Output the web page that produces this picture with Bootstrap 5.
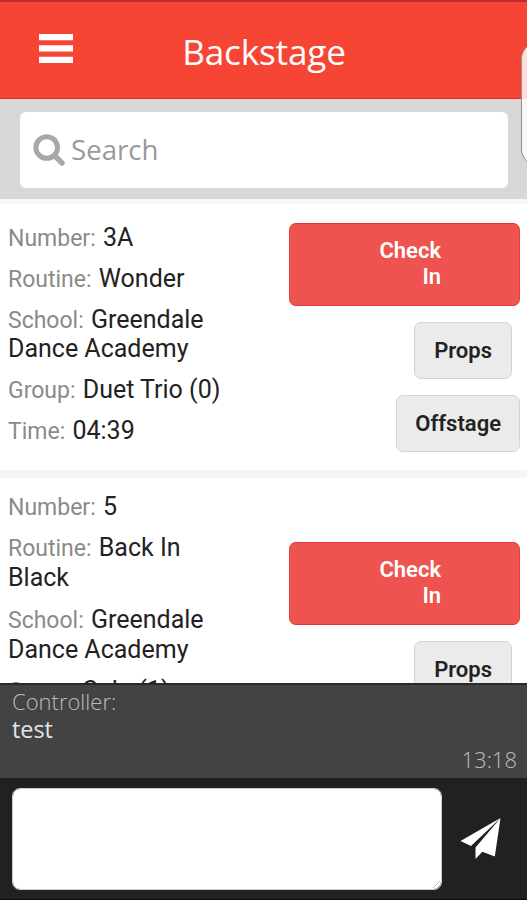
<!DOCTYPE html>
<html lang="en">
<head>
<meta charset="utf-8">
<meta name="viewport" content="width=device-width, initial-scale=1">
<title>Backstage</title>
<link href="https://cdn.jsdelivr.net/npm/bootstrap@5.3.0/dist/css/bootstrap.min.css" rel="stylesheet">
<style>
  body { font-family: Roboto, sans-serif; color: #222; }
  .app { height: 900px; }
  .app-bar { height: 99px; background: #f64435; border-top: 2px solid #b9302a; border-bottom: 1px solid #ea3019; padding: 0 39px 2px; }
  .app-title { font: 400 35.2px/48px "Open Sans", sans-serif; letter-spacing: -.2px; margin-right: 33px; padding-top: 3px; }
  .search-bar { height: 100px; background: #d7d7d7; padding: 13px 19px 11px 20px; }
  .search-box { border-radius: 6px; padding-left: 13px; gap: 6px; color: #a8a8a8; }
  .search-input, .search-input:focus { font: 400 27.6px/40px "Open Sans", sans-serif; color: #999; border: 0; box-shadow: none; padding: 0 0 3px; height: 76px; }
  .search-input::placeholder { color: #999; opacity: 1; }
  .entries { border-top: 5px solid #f7f7f7; }
  .entry { padding: 19px 7px 0 8px; }
  .entry + .entry { border-top: 8px solid #f5f5f5; padding-top: 14px; }
  .entry-first { height: 266px; }
  .details { width: 235px; }
  .details p { font-size: 25px; line-height: 30px; margin: 0 0 11.4px; }
  .entry-first .details p { line-height: 29.8px; margin-bottom: 11px; }
  .details span { font-size: 23px; line-height: 1; color: #8a8a8a; margin-right: 1px; }
  .actions { width: 231px; }
  .entry + .entry .actions { padding-top: 50px; }
  .act { font-size: 22px; line-height: 26px; font-weight: 600; border-radius: 7px; }
  .act-check { background: #ee5350; border: 1px solid #e24443; border-top-color: #dc3434; border-bottom-color: #dc3434; color: #fff; height: 83px; padding: 0 78px 1px 0; }
  .act-plain { background: #ebebeb; border: 1px solid #d4d4d4; color: #222; height: 57px; padding: 0 18px; }
  .act-props { padding: 0 19px; }
  .message { height: 95px; background: #434343; border-top: 2px solid #2a2a2a; padding: 2px 10px 0 12px; font: 400 23.4px/28px "Open Sans", sans-serif; color: #e6e6e6; }
  .message .who, .message .when { color: #bcbcbc; font-size: 22px; font-weight: 300; }
  .message .when { padding-top: 2px; }
  .composer { height: 122px; background: #212121; padding: 9px 26px 9px 12px; border-bottom: 1px solid #050505; }
  .composer-input { width: 430px; height: 102px; border: 1px solid #ccc; border-radius: 8px; resize: none; }
  .grip { right: 2px; bottom: 2px; }
  .edge-handle { left: 521px; top: 42px; width: 34px; height: 124px; border: 1.5px solid #929292; border-radius: 17px; background: rgba(255,255,255,.82); }
</style>
<script src="https://cdn.jsdelivr.net/npm/bootstrap@5.3.0/dist/js/bootstrap.bundle.min.js"></script>
</head>
<body class="bg-white overflow-hidden">
<div class="app d-flex flex-column position-relative overflow-hidden">
  <header class="app-bar d-flex align-items-center flex-shrink-0 text-white">
    <svg width="34" height="30" viewBox="0 0 34 30" fill="#fff" aria-label="Menu"><path d="M0 0h34v6.3H0zM0 11.3h34v6.3H0zM0 22.7h34V29H0z"/></svg>
    <h1 class="app-title flex-grow-1 text-center mb-0">Backstage</h1>
  </header>
  <div class="search-bar flex-shrink-0">
    <label class="search-box d-flex align-items-center bg-white overflow-hidden">
      <svg class="flex-shrink-0" width="32" height="32" viewBox="0 0 32 32" fill="none" stroke="currentColor"><circle cx="13.7" cy="13.5" r="10.8" stroke-width="5"/><path d="M21.5 21.5l7.5 7.5" stroke-width="5.4" stroke-linecap="round"/></svg>
      <input class="form-control search-input bg-transparent" placeholder="Search">
    </label>
  </div>
  <main class="entries flex-grow-1 overflow-hidden">
    <section class="entry entry-first d-flex justify-content-between">
      <div class="details">
        <p><span>Number:</span> 3A</p>
        <p><span>Routine:</span> Wonder</p>
        <p><span>School:</span> Greendale<br>Dance Academy</p>
        <p><span>Group:</span> Duet Trio (0)</p>
        <p><span>Time:</span> 04:39</p>
      </div>
      <div class="actions d-flex flex-column align-items-end">
        <button class="btn act act-check w-100 text-end">Check<br>In</button>
        <button class="btn act act-plain act-props mt-3 me-2">Props</button>
        <button class="btn act act-plain mt-3">Offstage</button>
      </div>
    </section>
    <section class="entry d-flex justify-content-between">
      <div class="details">
        <p><span>Number:</span> 5</p>
        <p><span>Routine:</span> Back In<br>Black</p>
        <p><span>School:</span> Greendale<br>Dance Academy</p>
        <p><span>Group:</span> Solo (1)</p>
      </div>
      <div class="actions d-flex flex-column align-items-end">
        <button class="btn act act-check w-100 text-end">Check<br>In</button>
        <button class="btn act act-plain act-props mt-3 me-2">Props</button>
      </div>
    </section>
  </main>
  <section class="message flex-shrink-0">
    <div class="who">Controller:</div>
    <div>test</div>
    <div class="when text-end">13:18</div>
  </section>
  <footer class="composer d-flex align-items-center justify-content-between flex-shrink-0">
    <div class="position-relative">
      <textarea class="form-control composer-input" aria-label="Message"></textarea>
      <svg class="grip position-absolute" width="7" height="7" viewBox="0 0 7 7" stroke="#bbb"><path d="M0 7L7 0M4 7L7 4"/></svg>
    </div>
    <svg width="41" height="42" viewBox="0 0 41 42" fill="#fff" aria-label="Send"><path d="M40.5 0L.5 23l10.5 5z"/><path d="M40.5 0L15.5 29.5V41l6.8-7.2L34.8 38.5z"/></svg>
  </footer>
  <div class="edge-handle position-absolute"></div>
</div>
</body>
</html>
